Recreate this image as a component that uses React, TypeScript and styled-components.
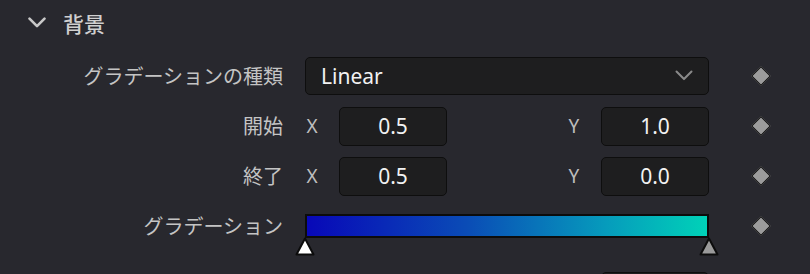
import styled, { createGlobalStyle } from "styled-components"

const GlobalStyle = createGlobalStyle`
  html, body {
    margin: 0;
    padding: 0;
    background: #28282e;
  }
  body {
    font-family: "Noto Sans", "Noto Sans CJK JP", sans-serif;
    overflow: hidden;
  }
`

const ChevronDown = ({ size, color, width }: { size: number; color: string; width: number }) => (
  <svg width={size} height={size * 0.62} viewBox="0 0 18 11" fill="none">
    <polyline
      points="1.5,1.5 9,9 16.5,1.5"
      stroke={color}
      strokeWidth={width}
      strokeLinecap="round"
      strokeLinejoin="round"
    />
  </svg>
)

const Marker = ({ fill }: { fill: string }) => (
  <svg width="20" height="19" viewBox="0 0 20 19">
    <polygon
      points="10,1.5 18.5,17.5 1.5,17.5"
      fill={fill}
      stroke="#0c0c0c"
      strokeWidth="2"
      strokeLinejoin="round"
    />
  </svg>
)

const Field = ({ axis, value }: { axis: string; value?: string }) => (
  <FieldGroup>
    <Axis>{axis}</Axis>
    <NumberBox>{value}</NumberBox>
  </FieldGroup>
)

export default function App() {
  return (
    <>
      <GlobalStyle />
      <Panel>
        <Header>
          <ChevronDown size={18} color="#c8c8c8" width={2.6} />
          <HeaderTitle>背景</HeaderTitle>
        </Header>

        <Row>
          <Label>グラデーションの種類</Label>
          <Select>
            <span>Linear</span>
            <ChevronDown size={18} color="#8a8a8a" width={2} />
          </Select>
          <Keyframe />
        </Row>

        <Row>
          <Label>開始</Label>
          <Pair>
            <Field axis="X" value="0.5" />
            <Field axis="Y" value="1.0" />
          </Pair>
          <Keyframe />
        </Row>

        <Row>
          <Label>終了</Label>
          <Pair>
            <Field axis="X" value="0.5" />
            <Field axis="Y" value="0.0" />
          </Pair>
          <Keyframe />
        </Row>

        <GradientRow>
          <Label>グラデーション</Label>
          <GradientTrack>
            <GradientBar />
            <Stop style={{ left: "0%" }}>
              <Marker fill="#ffffff" />
            </Stop>
            <Stop style={{ left: "100%" }}>
              <Marker fill="#9a9a9a" />
            </Stop>
          </GradientTrack>
          <Keyframe $offset={5} />
        </GradientRow>

        <Row>
          <Label />
          <Pair>
            <span />
            <NumberBox />
          </Pair>
          <span />
        </Row>
      </Panel>
    </>
  )
}

const Panel = styled.div`
  width: 810px;
  height: 274px;
  overflow: hidden;
  background: #28282e;
  color: #c4c4c4;
`

const Header = styled.div`
  display: flex;
  align-items: center;
  height: 46px;
  margin-bottom: 5px;
  padding-left: 28px;
  column-gap: 17px;
`

const HeaderTitle = styled.span`
  font-family: "Noto Sans CJK JP", sans-serif;
  font-size: 21px;
  font-weight: 500;
  color: #cfcfcf;
`

const Row = styled.div`
  display: grid;
  grid-template-columns: 283px 404px 1fr;
  column-gap: 22px;
  align-items: center;
  height: 50px;
`

const GradientRow = styled(Row)`
  height: 65px;
  align-items: start;
  padding-top: 13px;
  box-sizing: border-box;
`

const Label = styled.span`
  font-family: "Noto Sans CJK JP", sans-serif;
  font-size: 20px;
  color: #c4c4c4;
  text-align: right;
  line-height: 24px;
`

const Select = styled.div`
  display: flex;
  align-items: center;
  justify-content: space-between;
  height: 38px;
  box-sizing: border-box;
  padding: 0 15px 0 15px;
  background: #1e1e1f;
  border: 1.5px solid #0e0e0e;
  border-radius: 5px;
  font-size: 21px;
  color: #f2f2f2;
`

const Pair = styled.div`
  display: flex;
  justify-content: space-between;
  align-items: center;
`

const FieldGroup = styled.div`
  display: flex;
  align-items: center;
  column-gap: 20px;
`

const Axis = styled.span`
  font-size: 19px;
  color: #bdbdbd;
  min-width: 14px;
  text-align: center;
`

const NumberBox = styled.div`
  width: 108px;
  height: 39px;
  box-sizing: border-box;
  display: flex;
  align-items: center;
  justify-content: center;
  background: #1e1e1f;
  border: 1.5px solid #0e0e0e;
  border-radius: 5px;
  font-size: 21px;
  color: #f2f2f2;
`

const Keyframe = styled.span<{ $offset?: number }>`
  justify-self: start;
  margin-left: 23px;
  margin-top: ${(p) => p.$offset ?? 0}px;
  width: 12px;
  height: 12px;
  background: #9c9c9c;
  border: 1.5px solid #101010;
  transform: rotate(45deg);
`

const GradientTrack = styled.div`
  position: relative;
  height: 42px;
`

const GradientBar = styled.div`
  height: 24px;
  box-sizing: border-box;
  border: 2px solid #0c0c0c;
  background: linear-gradient(90deg, #0808b8 0%, #0a4cb6 40%, #069cbc 75%, #00d2b8 100%);
`

const Stop = styled.div`
  position: absolute;
  top: 23px;
  transform: translateX(-50%);
  line-height: 0;
`
